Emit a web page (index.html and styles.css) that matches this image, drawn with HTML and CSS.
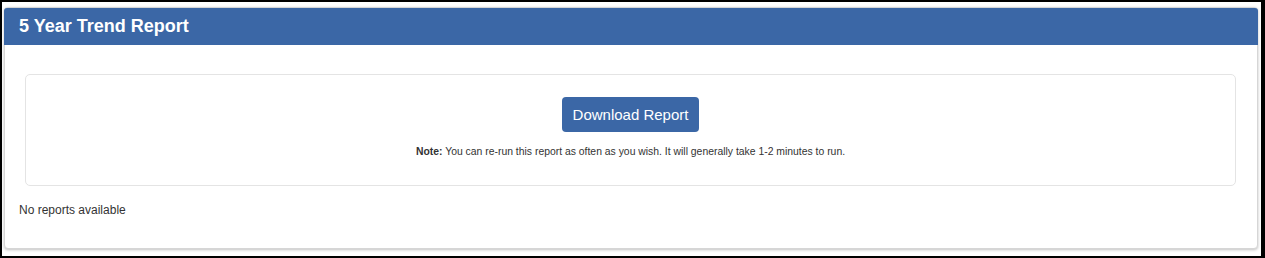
FILE: index.html
```html
<!DOCTYPE html>
<html lang="en">
<head>
    <meta charset="UTF-8">
    <meta name="viewport" content="width=device-width, initial-scale=1.0">
    <title>5 Year Trend Report</title>
    <link rel="stylesheet" href="styles.css">
</head>
<body>
    <div class="frame">
        <div class="panel">
            <div class="panel-heading">5 Year Trend Report</div>
            <div class="panel-body">
                <div class="run-box">
                    <button type="button" class="download-button">Download Report</button>
                    <p class="note"><strong>Note:</strong> You can re-run this report as often as you wish. It will generally take 1-2 minutes to run.</p>
                </div>
                <p class="empty">No reports available</p>
            </div>
        </div>
    </div>
</body>
</html>
```

FILE: styles.css
```css
html, body { margin: 0; padding: 0; }
body { font-family: "Liberation Sans", Arial, sans-serif; color: #333; background-color: #000; }
.frame { height: 258px; box-sizing: border-box; border-style: solid; border-color: #000; border-width: 2px 4px 2px 2px; padding: 5px 3px 7px 2px; background-color: #fff; }
.panel { height: 100%; box-sizing: border-box; border: 1px solid #d6d6d6; border-radius: 4px; background-color: #fff; box-shadow: 0 1px 3px rgba(0, 0, 0, 0.25); display: flex; flex-direction: column; }
.panel-heading { height: 37px; line-height: 37px; margin: 0 -1px; padding: 0 14px 0 15px; background-color: #3b67a6; color: #fff; font-size: 18px; font-weight: bold; border-radius: 3px 3px 0 0; }
.panel-body { padding: 29px 21px 0 20px; }
.run-box { border: 1px solid #e4e4e4; border-radius: 5px; height: 112px; box-sizing: border-box; padding-top: 22px; display: flex; flex-direction: column; align-items: center; }
.download-button { background-color: #3b67a6; color: #fff; border: none; border-radius: 4px; font-family: "Liberation Sans", Arial, sans-serif; font-size: 15px; height: 35px; padding: 0 11px; cursor: pointer; }
.download-button:hover { background-color: #2f5590; }
.note { margin: 13px 0 0; font-size: 10.4px; line-height: 14px; color: #333; }
.empty { margin: 17px 0 0 -6px; font-size: 12px; line-height: 14px; color: #333; }
```
